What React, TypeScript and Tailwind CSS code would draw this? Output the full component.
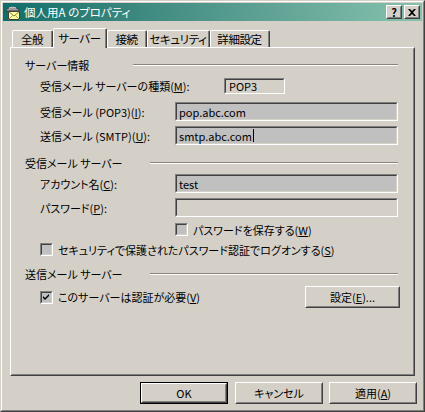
import React from "react";

const Raised = ({ className = "", children }: { className?: string; children?: React.ReactNode }) => (
  <div className={`border border-t-white border-l-white border-r-[#404040] border-b-[#404040] bg-[#d4d0c8] ${className}`}>
    <div className="h-full w-full border border-transparent border-r-[#808080] border-b-[#808080] flex items-center justify-center">
      {children}
    </div>
  </div>
);

const Sunken = ({ className = "", fill = "bg-[#c0c0c0]", children }: { className?: string; fill?: string; children?: React.ReactNode }) => (
  <div className={`border border-t-[#808080] border-l-[#808080] border-r-white border-b-white ${className}`}>
    <div className={`h-full w-full border border-t-[#404040] border-l-[#404040] border-r-[#d4d0c8] border-b-[#d4d0c8] flex items-center pl-[2px] ${fill}`}>
      {children}
    </div>
  </div>
);

const Check = ({ checked = false }: { checked?: boolean }) => (
  <Sunken className="w-[13px] h-[13px] shrink-0">
    {checked && (
      <svg width="7" height="7" viewBox="0 0 7 7" className="-ml-[1px]">
        <path d="M0 2 L2 4 L6 0 L6 2 L2 6 L0 4 Z" fill="#000" />
      </svg>
    )}
  </Sunken>
);

const Heading = ({ label, line }: { label: string; line: string }) => (
  <div className="flex items-center h-[16px]">
    <span>{label}</span>
    <div className={`ml-auto mr-[2px] ${line} border-t border-t-[#8c8474] border-b border-b-white`} />
  </div>
);

type TabProps = { label: string; w: string; active?: boolean };

const Tab = ({ label, w, active }: TabProps) =>
  active ? (
    <div className={`${w} h-[20px] -mb-px relative z-10 bg-[#d4d0c8] border-t border-l border-t-white border-l-white border-r border-r-[#404040] rounded-t-[2px] flex`}>
      <div className="flex-1 border-r border-r-[#808080] flex items-start justify-center pt-[1px] whitespace-nowrap">{label}</div>
    </div>
  ) : (
    <div className={`${w} h-[17px] border-t border-l border-t-white border-l-white border-r border-r-[#404040] rounded-t-[2px] flex`}>
      <div className="flex-1 border-r border-r-[#808080] flex items-center justify-center whitespace-nowrap">{label}</div>
    </div>
  );

function MailIcon() {
  return (
    <svg width="17" height="16" viewBox="0 0 17 16">
      <path d="M2 7 C2 2 15 2 15 7 Z" fill="#9a9a9a" stroke="#404040" strokeWidth="1" />
      <path d="M5 4 C7 3 10 3 12 4" stroke="#e0e0e0" strokeWidth="1" fill="none" />
      <rect x="4.5" y="7.5" width="11" height="8" fill="#ffffa0" stroke="#404040" />
      <path d="M4.5 7.5 L10 12 L15.5 7.5" fill="none" stroke="#808040" />
      <path d="M4.5 15.5 L8.5 11.5 M15.5 15.5 L11.5 11.5" stroke="#a0a060" />
    </svg>
  );
}

function TitleButton({ children }: { children: React.ReactNode }) {
  return <Raised className="w-[16px] h-[14px] text-black font-bold text-[11px] leading-none">{children}</Raised>;
}

export default function App() {
  return (
    <div className="w-[425px] h-[412px] bg-[#d4d0c8] border border-t-[#d4d0c8] border-l-[#d4d0c8] border-r-[#404040] border-b-[#404040] font-['Noto_Sans_CJK_JP',sans-serif] [font-feature-settings:'palt'] text-[11px] leading-[16px] text-black">
      <div className="h-full border border-t-white border-l-white border-r-[#808080] border-b-[#808080] p-px flex flex-col">
        {/* title bar */}
        <div className="h-[18px] flex items-center bg-gradient-to-r from-[#0c6e6a] to-[#86c2ae] pl-[1px] pr-[2px]">
          <MailIcon />
          <span className="ml-[3px] text-white text-[11.5px]">個人用A のプロパティ</span>
          <div className="ml-auto flex gap-[2px]">
            <TitleButton>?</TitleButton>
            <TitleButton>
              <svg width="8" height="7" viewBox="0 0 8 7">
                <path d="M0 0 L2 0 L4 2 L6 0 L8 0 L5 3.5 L8 7 L6 7 L4 5 L2 7 L0 7 L3 3.5 Z" fill="#000" />
              </svg>
            </TitleButton>
          </div>
        </div>

        {/* tabs */}
        <div className="mt-[7px] px-[7px]">
          <div className="h-[19px] flex items-end pl-[2px] text-[11.5px] tracking-[-0.4px]">
            <Tab label="全般" w="w-[41px]" />
            <Tab label="サーバー" w="w-[54px]" active />
            <Tab label="接続" w="w-[40px]" />
            <Tab label="セキュリティ" w="w-[63px]" />
            <Tab label="詳細設定" w="w-[60px]" />
          </div>

          {/* panel */}
          <div className="h-[329px] border border-t-white border-l-white border-r-[#404040] border-b-[#404040]">
            <div className="h-full border border-transparent border-r-[#808080] border-b-[#808080] pl-[13px] pt-[8px]">
              <div className="w-[375px] flex flex-col">
                <Heading label="サーバー情報" line="w-[265px]" />

                <div className="mt-[5px] pl-[15px] flex items-center h-[16px]">
                  <span className="w-[184px]">
                    受信メール サーバーの種類(<u>M</u>):
                  </span>
                  <Sunken className="w-[61px] h-[16px]" fill="bg-[#d4d0c8]">
                    <span className="pl-[1px]">POP3</span>
                  </Sunken>
                </div>

                <div className="mt-[8px] pl-[15px] flex items-center h-[19px]">
                  <span className="w-[135px]">
                    受信メール (POP3)(<u>I</u>):
                  </span>
                  <Sunken className="w-[223px] h-[19px]">pop.abc.com</Sunken>
                </div>

                <div className="mt-[5px] pl-[15px] flex items-center h-[19px]">
                  <span className="w-[135px]">
                    送信メール (SMTP)(<u>U</u>):
                  </span>
                  <Sunken className="w-[223px] h-[19px]">
                    smtp.abc.com
                    <span className="inline-block w-px h-[13px] bg-black ml-px" />
                  </Sunken>
                </div>

                <div className="mt-[10px]">
                  <Heading label="受信メール サーバー" line="w-[248px]" />
                </div>

                <div className="mt-[3px] pl-[15px] flex items-center h-[19px]">
                  <span className="w-[135px]">
                    アカウント名(<u>C</u>):
                  </span>
                  <Sunken className="w-[223px] h-[19px]">test</Sunken>
                </div>

                <div className="mt-[5px] pl-[15px] flex items-center h-[19px]">
                  <span className="w-[135px]">
                    パスワード(<u>P</u>):
                  </span>
                  <Sunken className="w-[223px] h-[19px]" fill="bg-[#d4d0c8]" />
                </div>

                <div className="mt-[6px] pl-[150px] flex items-center gap-[5px] h-[13px]">
                  <Check />
                  <span>
                    パスワードを保存する(<u>W</u>)
                  </span>
                </div>

                <div className="mt-[7px] pl-[15px] flex items-center gap-[5px] h-[13px]">
                  <Check />
                  <span>
                    セキュリティで保護されたパスワード認証でログオンする(<u>S</u>)
                  </span>
                </div>

                <div className="mt-[10px]">
                  <Heading label="送信メール サーバー" line="w-[248px]" />
                </div>

                <div className="mt-[4px] pl-[15px] flex items-center h-[22px]">
                  <Check checked />
                  <span className="ml-[5px]">
                    このサーバーは認証が必要(<u>V</u>)
                  </span>
                  <Raised className="ml-auto w-[95px] h-[22px]">
                    <span>
                      設定(<u>E</u>)...
                    </span>
                  </Raised>
                </div>
              </div>
            </div>
          </div>
        </div>

        {/* dialog buttons */}
        <div className="mt-[6px] flex justify-end pr-[5px]">
          <div className="w-[88px] h-[22px] border border-black">
            <Raised className="h-full w-full">OK</Raised>
          </div>
          <Raised className="ml-[7px] w-[88px] h-[22px]">キャンセル</Raised>
          <Raised className="ml-[6px] w-[88px] h-[22px]">
            <span>
              適用(<u>A</u>)
            </span>
          </Raised>
        </div>
      </div>
    </div>
  );
}
